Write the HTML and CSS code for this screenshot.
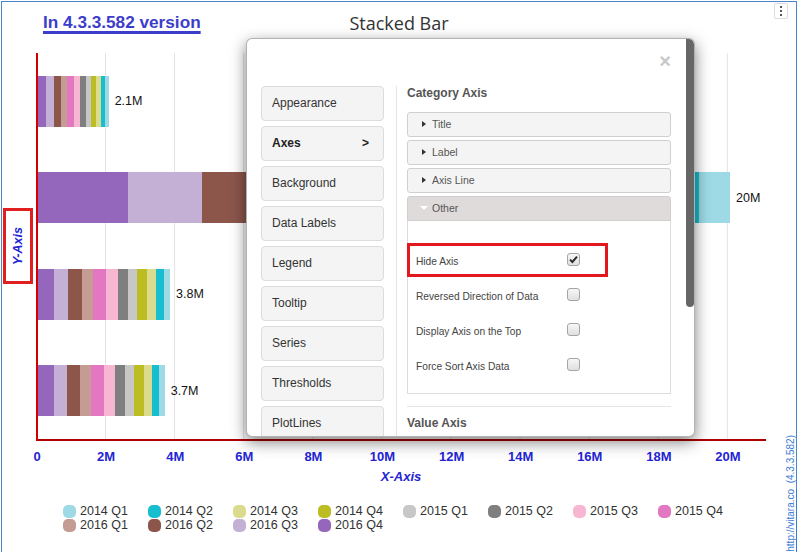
FILE: index.html
```html
<!DOCTYPE html>
<html lang="en">
<head>
<meta charset="utf-8">
<title>Stacked Bar</title>
<link rel="stylesheet" href="styles.css">
</head>
<body>
<div class="frame">
  <header class="head">
    <a class="ver" href="#">In 4.3.3.582 version</a>
    <h1 class="ttl">Stacked Bar</h1>
    <span></span>
  </header>
  <div class="kebab"><i></i><i></i><i></i></div>

  <div class="chart">
    <div class="yaxis"><div class="ybox"><span>Y-Axis</span></div></div>
    <div class="plot">
      <div class="row">
        <div class="bar"><i class="s1" style="width:7.7px"></i><i class="s2" style="width:8.3px"></i><i class="s3" style="width:7px"></i><i class="s4" style="width:6px"></i><i class="s5" style="width:7px"></i><i class="s6" style="width:6px"></i><i class="s7" style="width:6px"></i><i class="s8" style="width:5px"></i><i class="s9" style="width:5px"></i><i class="s10" style="width:5px"></i><i class="s11" style="width:4px"></i><i class="s12" style="width:3.7px"></i></div>
        <span class="val">2.1M</span>
      </div>
      <div class="row">
        <div class="bar"><i class="s1" style="width:90px"></i><i class="s2" style="width:74px"></i><i class="s3" style="width:70px"></i><i class="s4" style="width:60px"></i><i class="s5" style="width:55px"></i><i class="s6" style="width:50px"></i><i class="s7" style="width:50px"></i><i class="s8" style="width:50px"></i><i class="s9" style="width:55px"></i><i class="s10" style="width:50px"></i><i class="s11" style="width:57px"></i><i class="s12" style="width:31px"></i></div>
        <span class="val">20M</span>
      </div>
      <div class="row">
        <div class="bar"><i class="s1" style="width:16px"></i><i class="s2" style="width:14px"></i><i class="s3" style="width:14px"></i><i class="s4" style="width:11px"></i><i class="s5" style="width:13px"></i><i class="s6" style="width:12px"></i><i class="s7" style="width:10px"></i><i class="s8" style="width:9px"></i><i class="s9" style="width:10px"></i><i class="s10" style="width:9px"></i><i class="s11" style="width:8px"></i><i class="s12" style="width:6px"></i></div>
        <span class="val">3.8M</span>
      </div>
      <div class="row">
        <div class="bar"><i class="s1" style="width:16px"></i><i class="s2" style="width:13px"></i><i class="s3" style="width:13px"></i><i class="s4" style="width:11px"></i><i class="s5" style="width:13px"></i><i class="s6" style="width:11px"></i><i class="s7" style="width:10px"></i><i class="s8" style="width:9px"></i><i class="s9" style="width:10px"></i><i class="s10" style="width:8px"></i><i class="s11" style="width:7px"></i><i class="s12" style="width:5.7px"></i></div>
        <span class="val">3.7M</span>
      </div>
    </div>
  </div>

  <div class="xticks">
    <span>0</span><span>2M</span><span>4M</span><span>6M</span><span>8M</span><span>10M</span><span>12M</span><span>14M</span><span>16M</span><span>18M</span><span>20M</span>
  </div>
  <div class="xtitle">X-Axis</div>

  <div class="legend">
    <div class="li"><b class="s12"></b>2014 Q1</div>
    <div class="li"><b class="s11"></b>2014 Q2</div>
    <div class="li"><b class="s10"></b>2014 Q3</div>
    <div class="li"><b class="s9"></b>2014 Q4</div>
    <div class="li"><b class="s8"></b>2015 Q1</div>
    <div class="li"><b class="s7"></b>2015 Q2</div>
    <div class="li"><b class="s6"></b>2015 Q3</div>
    <div class="li"><b class="s5"></b>2015 Q4</div>
    <div class="li"><b class="s4"></b>2016 Q1</div>
    <div class="li"><b class="s3"></b>2016 Q2</div>
    <div class="li"><b class="s2"></b>2016 Q3</div>
    <div class="li"><b class="s1"></b>2016 Q4</div>
  </div>

  <div class="credit"><a href="#">http://vitara.co</a>&nbsp; (4.3.3.582)</div>

  <div class="dialog">
    <div class="dlg-head"><span class="close">×</span></div>
    <div class="dlg-body">
      <nav class="menu">
        <div class="mi">Appearance</div>
        <div class="mi active"><span>Axes</span><span>&gt;</span></div>
        <div class="mi">Background</div>
        <div class="mi">Data Labels</div>
        <div class="mi">Legend</div>
        <div class="mi">Tooltip</div>
        <div class="mi">Series</div>
        <div class="mi">Thresholds</div>
        <div class="mi">PlotLines</div>
      </nav>
      <section class="pane">
        <h3 class="sec">Category Axis</h3>
        <div class="acc first"><span class="tri"></span>Title</div>
        <div class="acc"><span class="tri"></span>Label</div>
        <div class="acc"><span class="tri"></span>Axis Line</div>
        <div class="acc open"><span class="tri-down"></span>Other</div>
        <div class="acc-body">
          <div class="opt"><span>Hide Axis</span><span class="cb"><svg viewBox="0 0 11 11" width="11" height="11"><path d="M2 5.6 L4.4 8 L9 2.6" stroke="#2a2a2a" stroke-width="2" fill="none"/></svg></span></div>
          <div class="opt"><span>Reversed Direction of Data</span><span class="cb"></span></div>
          <div class="opt"><span>Display Axis on the Top</span><span class="cb"></span></div>
          <div class="opt"><span>Force Sort Axis Data</span><span class="cb"></span></div>
          <div class="hl"></div>
        </div>
        <div class="sep"></div>
        <h3 class="sec va">Value Axis</h3>
      </section>
    </div>
    <div class="scroll"></div>
  </div>
</div>
</body>
</html>
```

FILE: styles.css
```css
html, body {
  margin: 0;
  padding: 0;
  overflow: hidden;
  background: #fff;
}
body {
  width: 798px;
  height: 552px;
  font-family: "Liberation Sans", Arial, sans-serif;
}
.frame {
  position: relative;
  margin: 1px 0 0 1px;
  width: 794px;
  height: 550px;
  border: 1px solid #4a86cf;
  border-bottom: none;
}

/* header */
.head {
  display: grid;
  grid-template-columns: 1fr auto 1fr;
  align-items: start;
  height: 51px;
  box-sizing: border-box;
  padding-top: 10px;
}
.ver {
  justify-self: start;
  margin-left: 41px;
  font-size: 17.2px;
  font-weight: bold;
  line-height: 20px;
  color: #3d3dcc;
  text-decoration: underline;
  text-decoration-thickness: 3px;
  text-underline-offset: 3px;
}
.ttl {
  margin: -1px 0 0 0;
  font-family: "Open Sans", sans-serif;
  font-weight: normal;
  font-size: 18px;
  line-height: 24px;
  color: #333;
}
.kebab {
  position: absolute;
  top: 1px;
  right: 8px;
  width: 14px;
  height: 16px;
  box-sizing: border-box;
  border: 1px solid #dcdcdc;
  border-radius: 2px;
  display: flex;
  flex-direction: column;
  align-items: center;
  justify-content: center;
  gap: 2px;
}
.kebab i {
  display: block;
  width: 2px;
  height: 2px;
  background: #555;
}

/* chart */
.chart {
  display: flex;
  height: 388px;
}
.yaxis {
  width: 34px;
  flex: none;
  display: flex;
  align-items: center;
  padding-bottom: 2px;
  box-sizing: border-box;
}
.ybox {
  margin-left: 1px;
  width: 30px;
  height: 76px;
  box-sizing: border-box;
  border: 3px solid #e02020;
  display: flex;
  align-items: center;
  justify-content: center;
}
.ybox span {
  writing-mode: vertical-rl;
  transform: rotate(180deg);
  font-style: italic;
  font-weight: bold;
  font-size: 12.5px;
  color: #2424d4;
}
.plot {
  width: 730px;
  flex: none;
  height: 388px;
  box-sizing: border-box;
  border-left: 2px solid #d40000;
  border-bottom: 2px solid #b00000;
  display: grid;
  grid-template-rows: repeat(4, 1fr);
  background-image: linear-gradient(to right, #e2e2e2 0, #e2e2e2 1px, transparent 1px);
  background-size: 69.1px 100%;
  background-position: 67px 0;
  background-repeat: repeat-x;
}
.row {
  display: flex;
  align-items: center;
}
.bar {
  display: flex;
  height: 51px;
}
.bar i {
  display: block;
  height: 100%;
  flex: none;
}
.val {
  margin-left: 6px;
  font-size: 12.5px;
  color: #111;
}

.s1 { background: #9467bd; }
.s2 { background: #c5b0d5; }
.s3 { background: #8c564b; }
.s4 { background: #c49c94; }
.s5 { background: #e377c2; }
.s6 { background: #f7b6d2; }
.s7 { background: #7f7f7f; }
.s8 { background: #c7c7c7; }
.s9 { background: #bcbd22; }
.s10 { background: #dbdb8d; }
.s11 { background: #17becf; }
.s12 { background: #9edae5; }

.xticks {
  display: grid;
  grid-template-columns: repeat(11, 69.1px);
  margin: 8px 0 0 0.5px;
  font-weight: bold;
  font-size: 13px;
  line-height: 16px;
  color: #2424d4;
  text-align: center;
}
.xtitle {
  margin: 4px 0 0 34px;
  width: 730px;
  text-align: center;
  font-style: italic;
  font-weight: bold;
  font-size: 13px;
  line-height: 16px;
  color: #2424d4;
}
.legend {
  margin: 19px 0 0 61px;
  display: grid;
  grid-template-columns: repeat(8, 85px);
}
.li {
  display: flex;
  align-items: center;
  gap: 4px;
  height: 14px;
  font-size: 12.5px;
  line-height: 14px;
  color: #333;
  white-space: nowrap;
}
.li b {
  display: block;
  width: 13px;
  height: 13px;
  border-radius: 5px;
  flex: none;
}
.credit {
  position: absolute;
  right: 0;
  bottom: 0;
  writing-mode: vertical-rl;
  transform: rotate(180deg);
  font-size: 10px;
  line-height: 11px;
  color: #3a7bd5;
  white-space: nowrap;
}
.credit a {
  color: #3a7bd5;
  text-decoration: underline;
}

/* dialog */
.dialog {
  position: absolute;
  left: 244px;
  top: 36px;
  width: 449px;
  height: 399px;
  box-sizing: border-box;
  border: 1px solid rgba(0, 0, 0, 0.3);
  border-radius: 6px;
  background: #fff;
  box-shadow: 0 5px 15px rgba(0, 0, 0, 0.5);
  overflow: hidden;
}
.dlg-head {
  height: 47px;
  box-sizing: border-box;
  padding: 12px 23px 0 0;
  display: flex;
  justify-content: flex-end;
}
.close {
  font-weight: bold;
  font-size: 20px;
  line-height: 20px;
  color: #c8c8c8;
}
.dlg-body {
  display: flex;
  align-items: flex-start;
  padding-left: 14px;
}
.menu {
  width: 123px;
  flex: none;
}
.mi {
  height: 35px;
  box-sizing: border-box;
  margin-bottom: 5px;
  border: 1px solid #dcdcdc;
  border-radius: 4px;
  background: #f4f4f4;
  display: flex;
  align-items: center;
  justify-content: space-between;
  padding: 0 14px 1px 10px;
  font-size: 12px;
  color: #333;
}
.mi.active {
  font-weight: bold;
  color: #222;
}
.pane {
  margin-left: 12px;
  border-left: 1px solid #e5e5e5;
  padding-left: 10px;
  width: 264px;
  flex: none;
  min-height: 400px;
}
.sec {
  margin: -1px 0 1px 0;
  font-size: 12px;
  font-weight: bold;
  line-height: 16px;
  color: #555;
}
.acc {
  height: 25px;
  box-sizing: border-box;
  border: 1px solid #cfcfcf;
  border-radius: 3px;
  background: #f4f4f4;
  margin-bottom: 3px;
  display: flex;
  align-items: center;
  padding: 0 0 2px 14px;
  font-size: 10.5px;
  color: #555;
}
.acc.first {
  margin-top: 11px;
}
.tri {
  width: 0;
  height: 0;
  border-left: 4px solid #333;
  border-top: 3.5px solid transparent;
  border-bottom: 3.5px solid transparent;
  margin-right: 6px;
}
.acc.open {
  background: #dfdbdb;
  border-radius: 3px 3px 0 0;
  margin-bottom: 0;
  padding-left: 12px;
}
.tri-down {
  width: 0;
  height: 0;
  border-top: 4px solid #fff;
  border-left: 4px solid transparent;
  border-right: 4px solid transparent;
  margin-right: 4px;
}
.acc-body {
  position: relative;
  border: 1px solid #dcdcdc;
  border-top: none;
  padding: 22px 0 10px 8px;
}
.opt {
  height: 35px;
  display: grid;
  grid-template-columns: 151px 13px;
  align-items: center;
  font-size: 10.2px;
  color: #444;
}
.opt span:first-child {
  padding-top: 2px;
}
.cb {
  width: 13px;
  height: 13px;
  box-sizing: border-box;
  border: 1px solid #a5a5a5;
  border-radius: 3px;
  background: linear-gradient(#f6f6f6, #e0e0e0);
  margin-top: -3px;
  display: flex;
  align-items: center;
  justify-content: center;
}
.hl {
  position: absolute;
  left: -1px;
  top: 22px;
  width: 201px;
  height: 34px;
  box-sizing: border-box;
  border: 3px solid #e3171e;
}
.sep {
  margin-top: 12px;
  border-top: 1px solid #e5e5e5;
}
.sec.va {
  padding-top: 9px;
}
.scroll {
  position: absolute;
  top: 0;
  right: 0;
  width: 8px;
  height: 268px;
  background: #666;
  border-radius: 0 5px 4px 4px;
}
```
